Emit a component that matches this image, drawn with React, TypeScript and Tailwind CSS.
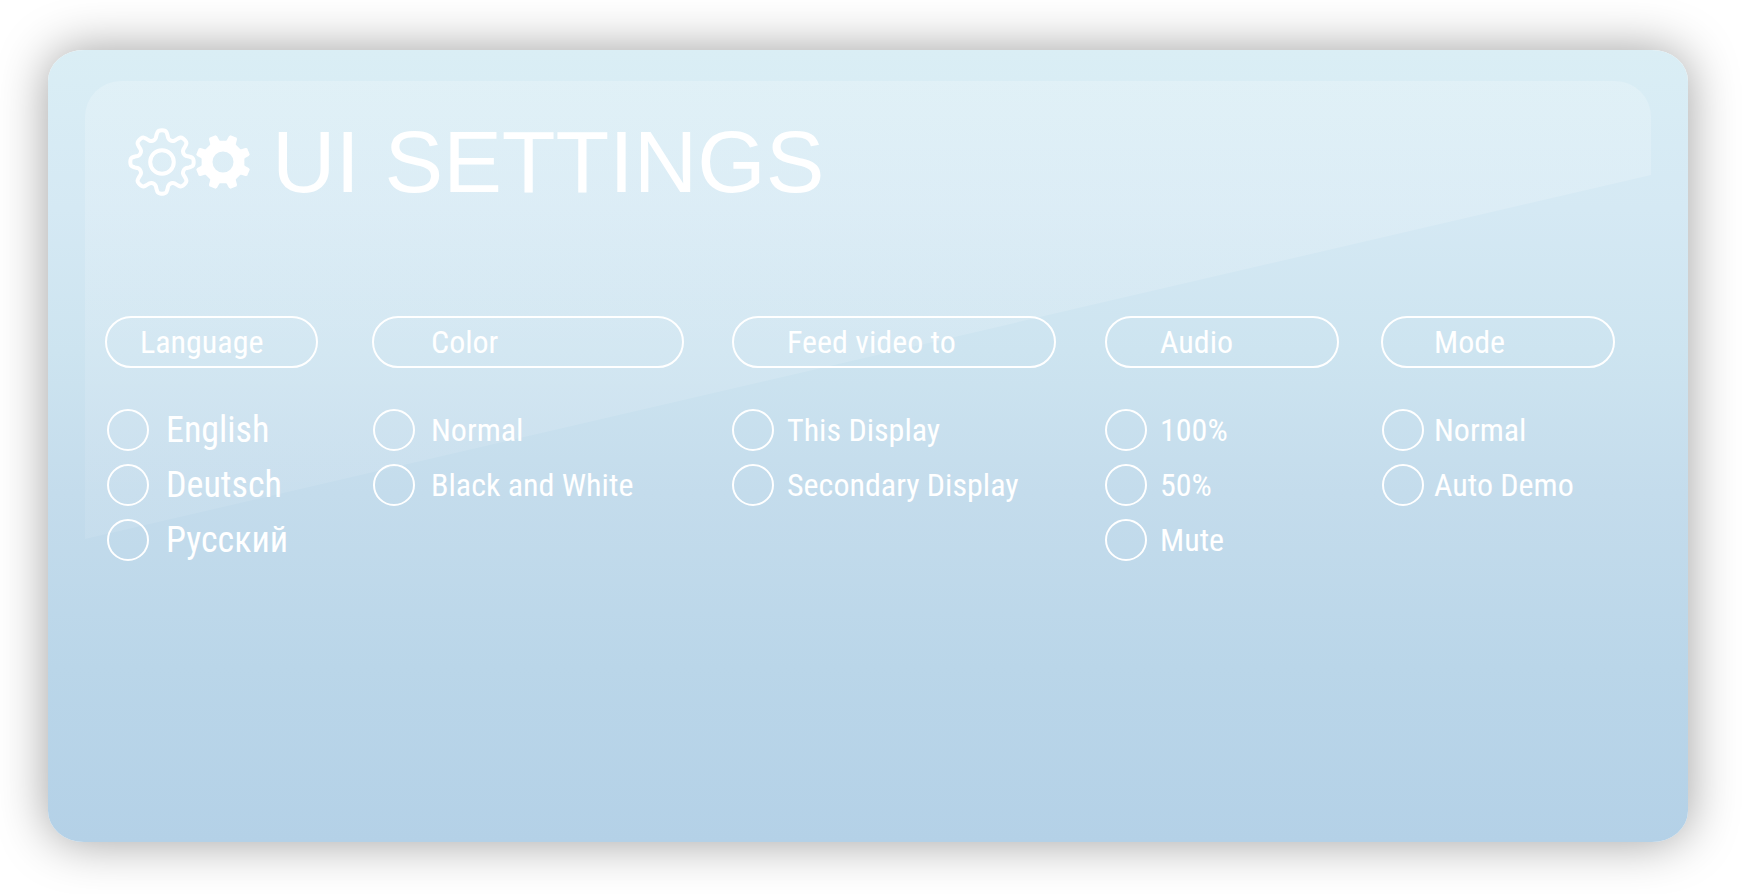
import React from "react";

type Setting = {
  name: string;
  title: string;
  options: string[];
  column: string;
  heading: string;
  option: string;
};

const settings: Setting[] = [
  {
    name: "language",
    title: "Language",
    options: ["English", "Deutsch", "Русский"],
    column: "pr-[54px]",
    heading: "pl-[33px]",
    option: "gap-[17px] pl-0.5 text-4xl",
  },
  {
    name: "color",
    title: "Color",
    options: ["Normal", "Black and White"],
    column: "pr-12",
    heading: "pl-[57px]",
    option: "gap-4 pl-px text-[32px]",
  },
  {
    name: "feed",
    title: "Feed video to",
    options: ["This Display", "Secondary Display"],
    column: "pr-[49px]",
    heading: "pl-[53px]",
    option: "gap-[13px] text-[32px]",
  },
  {
    name: "audio",
    title: "Audio",
    options: ["100%", "50%", "Mute"],
    column: "pr-[42px]",
    heading: "pl-[53px]",
    option: "gap-[13px] text-[32px]",
  },
  {
    name: "mode",
    title: "Mode",
    options: ["Normal", "Auto Demo"],
    column: "",
    heading: "pl-[51px]",
    option: "gap-[10px] pl-px text-[32px]",
  },
];

type Point = [number, number];

// Repeats one tooth profile, given as [radius, degrees], eight times round the origin.
function gearPoints(profile: Point[], start: number): Point[] {
  const points: Point[] = [];
  for (let tooth = 0; tooth < 8; tooth++) {
    for (const [radius, degrees] of profile) {
      const angle = ((start + tooth * 45 + degrees) * Math.PI) / 180;
      points.push([radius * Math.sin(angle), -radius * Math.cos(angle)]);
    }
  }
  return points;
}

// Closed Catmull-Rom curve through the points.
function smoothPath(points: Point[]): string {
  const n = points.length;
  const at = (i: number) => points[(i + n) % n];
  let d = `M${at(0)[0].toFixed(2)} ${at(0)[1].toFixed(2)}`;
  for (let i = 0; i < n; i++) {
    const [a, b, c, e] = [at(i - 1), at(i), at(i + 1), at(i + 2)];
    const coords = [
      b[0] + (c[0] - a[0]) / 6,
      b[1] + (c[1] - a[1]) / 6,
      c[0] - (e[0] - b[0]) / 6,
      c[1] - (e[1] - b[1]) / 6,
      c[0],
      c[1],
    ];
    d += `C${coords.map((v) => v.toFixed(2)).join(" ")}`;
  }
  return d + "Z";
}

const outlineGear = smoothPath(
  gearPoints(
    [
      [23.4, -19],
      [24.8, -14.5],
      [28, -11],
      [30.8, -7.5],
      [31.6, -3.5],
      [31.6, 3.5],
      [30.8, 7.5],
      [28, 11],
      [24.8, 14.5],
      [23.4, 19],
    ],
    0
  )
);

const solidGear =
  "M" +
  gearPoints(
    [
      [21.6, -14],
      [22.4, -12.5],
      [26.4, -9.5],
      [27.8, -7],
      [27.8, 7],
      [26.4, 9.5],
      [22.4, 12.5],
      [21.6, 14],
    ],
    22.5
  )
    .map(([x, y]) => `${x.toFixed(2)} ${y.toFixed(2)}`)
    .join("L") +
  "Z M10.5 0A10.5 10.5 0 1 0 -10.5 0A10.5 10.5 0 1 0 10.5 0Z";

function Gears() {
  return (
    <svg className="h-[68px] w-[124px] shrink-0" viewBox="-34 -34 124 68" fill="none" aria-hidden="true">
      <path d={outlineGear} stroke="white" strokeWidth="4" strokeLinejoin="round" />
      <circle r="11.8" stroke="white" strokeWidth="4" />
      <path d={solidGear} transform="translate(61 0)" fill="white" fillRule="evenodd" />
    </svg>
  );
}

function SettingColumn({ setting }: { setting: Setting }) {
  return (
    <fieldset className={`min-w-0 ${setting.column}`}>
      <legend className="contents">
        <span
          className={`flex h-[52px] w-full items-center whitespace-nowrap rounded-full border-2 border-white text-[32px] leading-none ${setting.heading}`}
        >
          {setting.title}
        </span>
      </legend>
      <div className="mt-[41px] flex flex-col gap-[13px]">
        {setting.options.map((option) => (
          <label key={option} className={`flex h-[42px] cursor-pointer items-center whitespace-nowrap ${setting.option}`}>
            <input
              type="radio"
              name={setting.name}
              value={option}
              className="size-[42px] shrink-0 cursor-pointer appearance-none rounded-full border-2 border-white checked:bg-white/60"
            />
            {option}
          </label>
        ))}
      </div>
    </fieldset>
  );
}

export default function App() {
  return (
    <div className="flex min-h-screen bg-white pt-[50px] pr-[54px] pb-[52px] pl-12 text-white">
      <main className="relative flex-1 rounded-[36px/31px] bg-[linear-gradient(#daeef5,#d5e9f4_20%,#cde4f0_38%,#c4dcec_56%,#bad6e9_78%,#b4d1e7)] shadow-[0_0_50px_rgba(0,0,0,0.38)]">
        <div className="pointer-events-none absolute top-[31px] right-[37px] left-[37px] h-[458px] rounded-t-[36px] bg-linear-to-b from-white/20 to-white/8 [clip-path:polygon(0_0,100%_0,100%_94px,0_100%)]" />
        <div className="relative pt-[76px] pr-[73px] pl-[57px]">
          <header className="flex items-center gap-5 pl-[23px] font-['Liberation_Sans',Arial,sans-serif]">
            <Gears />
            <h1 className="whitespace-nowrap text-[88px] leading-[72px]">UI SETTINGS</h1>
          </header>
          <form className="mt-[118px] grid grid-cols-[267fr_360fr_373fr_276fr_234fr] font-['Roboto_Condensed','Arial_Narrow',sans-serif]">
            {settings.map((setting) => (
              <SettingColumn key={setting.name} setting={setting} />
            ))}
          </form>
        </div>
      </main>
    </div>
  );
}
